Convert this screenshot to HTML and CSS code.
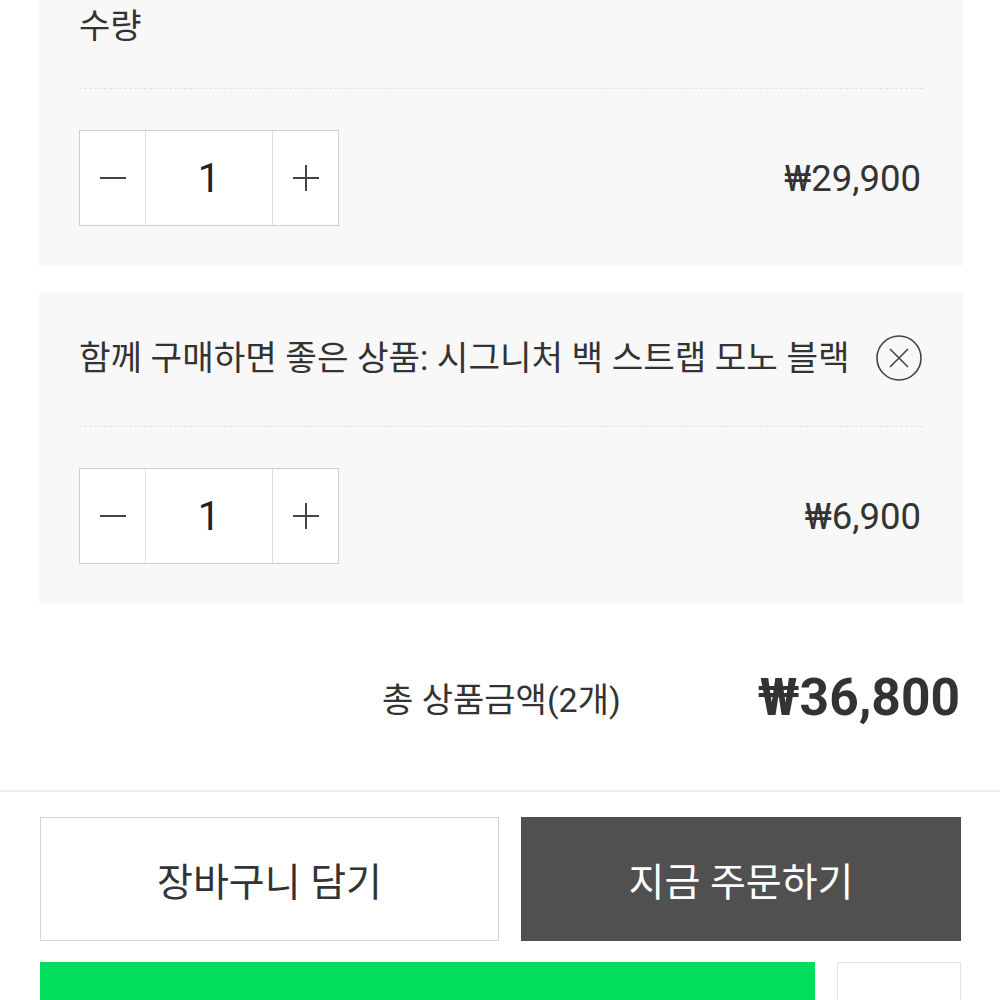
FILE: index.html
```
<!DOCTYPE html>
<html lang="ko">
<head>
<meta charset="utf-8">
<link rel="stylesheet" href="styles.css">
</head>
<body>
<div class="page">
  <section class="panel panel-first">
    <div class="panel-head">
      <span class="panel-title">수량</span>
    </div>
    <div class="panel-body">
      <div class="qty">
        <button class="qty-btn" aria-label="minus">
          <svg width="28" height="28" viewBox="0 0 28 28"><path d="M1 14H27" stroke="#444" stroke-width="2"/></svg>
        </button>
        <div class="qty-val">1</div>
        <button class="qty-btn" aria-label="plus">
          <svg width="28" height="28" viewBox="0 0 28 28"><path d="M1 14H27M14 1V27" stroke="#444" stroke-width="2"/></svg>
        </button>
      </div>
      <span class="price">₩29,900</span>
    </div>
  </section>

  <section class="panel panel-second">
    <div class="panel-head">
      <span class="panel-title">함께 구매하면 좋은 상품: 시그니처 백 스트랩 모노 블랙</span>
      <svg class="close" width="48" height="48" viewBox="0 0 48 48"><circle cx="24" cy="24" r="22" fill="none" stroke="#444" stroke-width="1.6"/><path d="M15 15L33 33M33 15L15 33" stroke="#444" stroke-width="1.6"/></svg>
    </div>
    <div class="panel-body">
      <div class="qty">
        <button class="qty-btn" aria-label="minus">
          <svg width="28" height="28" viewBox="0 0 28 28"><path d="M1 14H27" stroke="#444" stroke-width="2"/></svg>
        </button>
        <div class="qty-val">1</div>
        <button class="qty-btn" aria-label="plus">
          <svg width="28" height="28" viewBox="0 0 28 28"><path d="M1 14H27M14 1V27" stroke="#444" stroke-width="2"/></svg>
        </button>
      </div>
      <span class="price">₩6,900</span>
    </div>
  </section>

  <div class="total">
    <span class="total-label">총 상품금액(2개)</span>
    <span class="total-price">₩36,800</span>
  </div>

  <div class="actions">
    <div class="btn-row">
      <button class="btn btn-cart">장바구니 담기</button>
      <button class="btn btn-order">지금 주문하기</button>
    </div>
    <div class="btn-row btn-row-2">
      <div class="npay"></div>
      <div class="wish"></div>
    </div>
  </div>
</div>
</body>
</html>
```
FILE: styles.css
```
* { box-sizing: border-box; }
html, body { margin: 0; padding: 0; background: #fff; }
body {
  font-family: Roboto, "Noto Sans CJK KR", sans-serif;
  color: #333;
  width: 1000px;
  height: 1000px;
  overflow: hidden;
}
.page { display: flex; flex-direction: column; }
.panel {
  margin: 0 37px 0 39px;
  background: #f8f8f8;
  padding: 2px 40px 40px;
}
.panel-second { margin-top: 26px; padding-top: 42px; }
.panel-head {
  display: flex;
  align-items: center;
  justify-content: space-between;
  height: 87px;
  border-bottom: 1px dashed #e2e2e2;
  padding-bottom: 39px;
}
.panel-second .panel-head { height: 93px; padding-bottom: 44px; }
.panel-title {
  font-size: 34px;
  line-height: 48px;
  color: #333;
}
.panel-second .panel-title { font-size: 34.3px; }
.close { margin-right: 0; }
.panel-body {
  display: flex;
  align-items: center;
  justify-content: space-between;
  margin-top: 41px;
}
.qty {
  display: flex;
  height: 96px;
  border: 1px solid #cfcfcf;
  background: #fff;
}
.qty-btn {
  width: 65px;
  border: 0;
  background: #fff;
  padding: 0;
  display: flex;
  align-items: center;
  justify-content: center;
}
.qty-val {
  width: 128px;
  border-left: 1px solid #dcdcdc;
  border-right: 1px solid #dcdcdc;
  display: flex;
  align-items: center;
  justify-content: center;
  font-size: 40px;
  color: #222;
}
.price {
  font-size: 36.5px;
  color: #333;
  margin-right: 2px;
}
.total {
  height: 188px;
  display: flex;
  align-items: center;
  justify-content: flex-end;
  gap: 137px;
  padding-right: 40px;
  border-bottom: 2px solid #ebebeb;
}
.total-label { font-size: 34px; color: #333; }
.total-price { font-size: 51.5px; font-weight: 700; color: #333; }
.actions { padding: 25px 39px 0 40px; }
.btn-row { display: flex; gap: 22px; }
.btn {
  height: 124px;
  font-family: Roboto, "Noto Sans CJK KR", sans-serif;
  font-size: 39px;
  padding: 0;
}
.btn-cart {
  width: 459px;
  background: #fff;
  border: 1px solid #d4d4d4;
  color: #333;
}
.btn-order {
  flex: 1;
  background: #505050;
  border: 0;
  color: #fff;
}
.btn-row-2 { margin-top: 21px; }
.npay { width: 775px; height: 60px; background: #02dd5b; }
.wish { flex: 1; height: 60px; border: 1px solid #e2e2e2; background: #fff; }
```
